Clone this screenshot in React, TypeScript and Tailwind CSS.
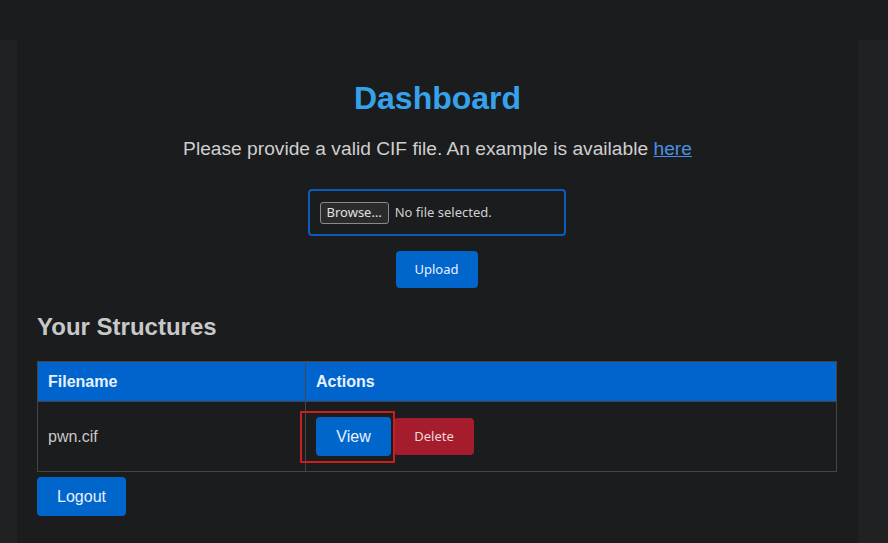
import React from "react";

export default function App() {
  const sans = { fontFamily: '"Liberation Sans", Arial, sans-serif' };
  return (
    <div className="min-h-screen w-full bg-[#202123]" style={sans}>
      <div className="h-[40px] w-full bg-[#1b1c1e]" />
      <div className="ml-[17px] w-[841px] min-h-[503px] bg-[#1b1c1e] px-[20px] pt-[39px]">
        <h1 className="text-center text-[32px] leading-[38px] font-bold text-[#36a2eb]">Dashboard</h1>
        <p className="mt-[20px] text-center text-[19.2px] leading-[23px] text-[#cfcfcf]">
          Please provide a valid CIF file. An example is available{" "}
          <a href="#" className="text-[#4a90e2] underline">here</a>
        </p>
        <div className="mt-[29px] flex flex-col items-center">
          <div
            className="mr-[2px] flex h-[47px] w-[258px] items-center gap-[6px] rounded-[4px] border-2 border-[#0a5cbf] bg-[#1b1c1e] px-[10px]"
            style={{ fontFamily: '"Noto Sans", sans-serif' }}
          >
            <span className="flex h-[22px] items-center rounded-[3px] border border-[#8a8a8a] bg-[#2b2b2b] px-[6px] text-[13px] text-[#e0e0e0]">
              Browse…
            </span>
            <span className="text-[13px] text-[#d0d0d0]">No file selected.</span>
          </div>
          <button
            className="mr-[2px] mt-[15px] h-[37px] w-[82px] rounded-[4px] bg-[#0066cc] text-[13px] text-[#e8f0ff]"
            style={{ fontFamily: '"Noto Sans", sans-serif' }}
          >
            Upload
          </button>
        </div>
        <h2 className="mt-[25px] text-[24px] leading-[28px] font-bold text-[#c8c8c8]">Your Structures</h2>
        <table className="mt-[20px] w-[800px] border-collapse border border-[#444]">
          <thead>
            <tr className="h-[40px] bg-[#0064cc] text-left text-[16px] text-[#e6f2ff]">
              <th className="w-[268px] border-r border-[#3a4a5a] pl-[10px] font-bold">Filename</th>
              <th className="pl-[10px] font-bold">Actions</th>
            </tr>
          </thead>
          <tbody>
            <tr className="h-[70px] border-t border-[#444]">
              <td className="border-r border-[#444] pl-[10px] text-[16px] text-[#c8c8c8]">pwn.cif</td>
              <td className="pl-[10px]">
                <div className="relative flex items-center">
                  <button className="h-[39px] w-[75px] rounded-[4px] bg-[#0066cc] text-[16px] text-[#e8f0ff]">View</button>
                  <button
                    className="ml-[3px] h-[37px] w-[80px] rounded-[4px] bg-[#a51d2d] text-[13px] text-[#f0d8dc]"
                    style={{ fontFamily: '"Noto Sans", sans-serif' }}
                  >
                    Delete
                  </button>
                  <div className="pointer-events-none absolute left-[-16px] top-[-6px] h-[52px] w-[95px] border-2 border-[#cc1e1e]" />
                </div>
              </td>
            </tr>
          </tbody>
        </table>
        <button className="mt-[5px] h-[39px] w-[89px] rounded-[4px] bg-[#0066cc] text-[16px] text-[#e8f0ff]">Logout</button>
      </div>
    </div>
  );
}
